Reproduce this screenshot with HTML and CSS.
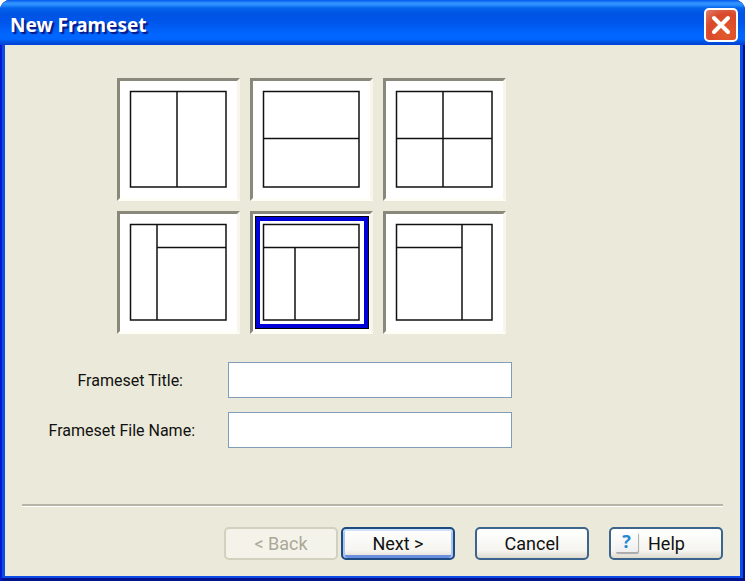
FILE: index.html
```html
<!DOCTYPE html>
<html lang="en">
<head>
    <meta charset="UTF-8">
    <meta name="viewport" content="width=device-width, initial-scale=1.0">
    <title>New Frameset</title>
    <link rel="stylesheet" href="styles.css">
</head>
<body>
    <form class="window">
        <!-- title bar -->
        <header class="title-bar">
            <h1>New Frameset</h1>
            <button type="button" class="btn-close" aria-label="Close">
                <svg viewBox="0 0 34 34" width="34" height="34">
                    <path d="M10 10L24 24M24 10L10 24"/>
                </svg>
            </button>
        </header>

        <main class="content">
            <!-- frame layouts -->
            <div class="layouts" role="radiogroup" aria-label="Frameset layout">
                <label class="tile">
                    <input type="radio" name="layout" aria-label="Two columns">
                    <svg viewBox="0 0 117 117"><path d="M10.500 10.500H106V106H10.500ZM57 10.500V106"/></svg>
                </label>
                <label class="tile">
                    <input type="radio" name="layout" aria-label="Two rows">
                    <svg viewBox="0 0 117 117"><path d="M10.500 10.500H106V106H10.500ZM10.500 57.500H106"/></svg>
                </label>
                <label class="tile">
                    <input type="radio" name="layout" aria-label="Four frames">
                    <svg viewBox="0 0 117 117"><path d="M10.500 10.500H106V106H10.500ZM57 10.500V106M10.500 57.500H106"/></svg>
                </label>
                <label class="tile">
                    <input type="radio" name="layout" aria-label="Left column and header">
                    <svg viewBox="0 0 117 117"><path d="M10.500 10.500H106V106H10.500ZM37 10.500V106M37 33.500H106"/></svg>
                </label>
                <label class="tile">
                    <input type="radio" name="layout" aria-label="Header and left column" checked>
                    <svg viewBox="0 0 117 117"><path d="M10.500 10.500H106V106H10.500ZM10.500 33.500H106M42 33.500V106"/></svg>
                </label>
                <label class="tile">
                    <input type="radio" name="layout" aria-label="Header and right column">
                    <svg viewBox="0 0 117 117"><path d="M10.500 10.500H106V106H10.500ZM76 10.500V106M10.500 33.500H76"/></svg>
                </label>
            </div>

            <div class="fields">
                <label for="title" class="label-title">Frameset Title:</label>
                <input type="text" id="title">
                <label for="filename">Frameset File Name:</label>
                <input type="text" id="filename">
            </div>

            <!-- buttons -->
            <footer class="footer">
                <div class="steps">
                    <button type="button" class="btn" disabled>&lt; Back</button>
                    <button type="submit" class="btn btn-default">Next &gt;</button>
                </div>
                <button type="button" class="btn">Cancel</button>
                <button type="button" class="btn btn-help"><span class="help-icon">?</span>Help</button>
            </footer>
        </main>
    </form>
</body>
</html>
```
FILE: styles.css
```css
*{
    margin: 0;
    padding: 0;
    box-sizing: border-box;
}
body{
    background: #fff;
    font-family: Roboto, "Liberation Sans", sans-serif;
    font-size: 18px;
    color: #111;
}
.window{
    min-height: 100vh;
    display: flex;
    flex-direction: column;
    padding: 0 5px 5px;
    border-radius: 10px 10px 0 0;
    background: #0c4be8;
    box-shadow: inset 2px 0 #0019cf, inset -2px 0 #00138c, inset 0 -3px #00138c;
    overflow: hidden;
}
.title-bar{
    height: 45px;
    margin: 0 -5px;
    padding: 4px 7px 0 10px;
    display: flex;
    align-items: center;
    justify-content: space-between;
    background: linear-gradient(#0058ee 0, #3593ff 3px, #288eff 5px, #0463ea 8px, #0054e3 14px, #0055eb 22px, #0066ff 34px, #0066ff 39px, #0052e0 42px, #003dd7 45px);
}
.title-bar h1{
    font-family: "Noto Sans", "Liberation Sans", sans-serif;
    font-size: 19px;
    font-weight: 700;
    color: #fff;
    text-shadow: 2px 2px 1px #0a1883;
}
.btn-close{
    width: 34px;
    height: 34px;
    border: 2px solid #fff;
    border-radius: 5px;
    background: radial-gradient(circle at 70% 75%, #e45a2c, #d9482a 60%, #e2806a);
    display: flex;
    align-items: center;
    justify-content: center;
}
.btn-close svg{
    flex: none;
    fill: none;
    stroke: #fff;
    stroke-width: 4;
    stroke-linecap: round;
}
.content{
    flex: 1;
    display: flex;
    flex-direction: column;
    padding: 33px 17px 16px;
    background: #ebe9d9;
}
.layouts{
    display: grid;
    grid-template-columns: repeat(3, 123px);
    gap: 10px;
    margin-left: 95px;
}
.tile{
    height: 123px;
    border: 3px solid;
    border-color: #8a877b #f8f6ec #fffef6 #8a877b;
    background: #fff;
    position: relative;
}
.tile input{
    position: absolute;
    opacity: 0;
}
.tile svg{
    display: block;
    width: 100%;
    fill: none;
    stroke: #111;
    stroke-width: 1.500;
}
.tile:has(input:checked)::after{
    content: "";
    position: absolute;
    inset: 2px 1px 2px 2px;
    border: 5px solid #0000d8;
    outline: 1px solid #000;
    outline-offset: -1px;
}
.fields{
    display: grid;
    grid-template-columns: 150px minmax(0, 284px);
    column-gap: 33px;
    row-gap: 14px;
    align-items: center;
    margin: 28px 0 0 23px;
}
.fields label{
    font-size: 16px;
    text-align: right;
    white-space: nowrap;
}
.fields .label-title{
    padding-right: 12px;
}
.fields input{
    width: 100%;
    height: 36px;
    padding: 0 8px;
    border: 1px solid #7f9db9;
    background: #fff;
    font: inherit;
}
.footer{
    display: flex;
    justify-content: flex-end;
    gap: 20px;
    margin-top: auto;
    padding-top: 21px;
    border-top: 2px solid #b8b5a6;
    box-shadow: inset 0 1px #fff;
}
.steps{
    display: flex;
    gap: 3px;
}
.btn{
    width: 114px;
    height: 33px;
    border: 2px solid #3c648c;
    border-radius: 5px;
    background: linear-gradient(#fff, #f5f4ef 75%, #dedad0);
    font: inherit;
    color: #111;
}
.btn:disabled{
    border-color: #d2d0bf;
    background: #f4f3e9;
    color: #aaa899;
}
.btn-default{
    border-color: #1d4a80;
    box-shadow: inset 0 2px #cfe0fb, inset 2px 0 #a9c5f3, inset -2px 0 #a9c5f3, inset 0 -3px #6d8fe0;
}
.btn-help{
    display: flex;
    align-items: center;
    gap: 10px;
    padding-left: 4px;
}
.help-icon{
    width: 23px;
    height: 21px;
    line-height: 20px;
    margin-bottom: 4px;
    border-radius: 2px;
    background: linear-gradient(#fff, #eee);
    box-shadow: 1px 2px 1px #aaa;
    font-family: "Open Sans", sans-serif;
    font-size: 18px;
    font-weight: 700;
    color: #2389d0;
}
```
